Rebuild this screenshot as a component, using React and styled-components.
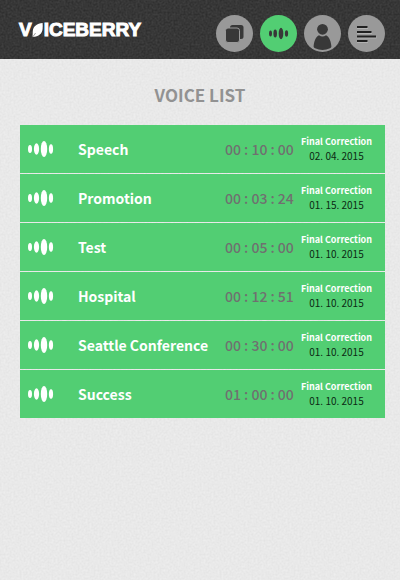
import React from "react";
import styled, { createGlobalStyle } from "styled-components";

const grain = (light, dark) =>
  `url("data:image/svg+xml,${encodeURIComponent(
    `<svg xmlns="http://www.w3.org/2000/svg" width="200" height="200"><filter id="n" x="0" y="0" width="100%" height="100%" color-interpolation-filters="sRGB"><feTurbulence type="fractalNoise" baseFrequency="0.5" numOctaves="3" seed="4" stitchTiles="stitch"/><feColorMatrix type="matrix" values="${light} 0 0 0 ${dark} ${light} 0 0 0 ${dark} ${light} 0 0 0 ${dark} 0 0 0 0 1"/></filter><rect width="200" height="200" filter="url(#n)"/></svg>`
  )}")`;

const GlobalStyle = createGlobalStyle`
  *, *::before, *::after { box-sizing: border-box; }
  body {
    margin: 0;
    min-height: 100vh;
    background: #e8e8e8 ${grain(0.06, 0.882)};
    font-family: "Noto Sans CJK SC", "Open Sans", sans-serif;
    font-variant-ligatures: none;
  }
`;

const Header = styled.header`
  display: flex;
  align-items: center;
  justify-content: space-between;
  padding: 15px 15px 7px 19px;
  background: #383838 ${grain(0.12, 0.155)};
`;

const Logo = styled.a`
  display: flex;
  align-items: center;
  margin-bottom: 8px;
  color: #fff;
  font: bold 19px/20px "Liberation Sans", Arial, sans-serif;
  -webkit-text-stroke: 1px #fff;
  stroke-linejoin: round;
  text-decoration: none;
`;

const Leaf = styled.svg`
  width: 12px;
  height: 14px;
`;

const Nav = styled.nav`
  display: flex;
  gap: 7px;
`;

const NavButton = styled.button`
  width: 37px;
  height: 37px;
  padding: 0;
  border: 0;
  border-radius: 50%;
  background: ${({ $active }) => ($active ? "#52ce73" : "#999")};
  color: #383838;
  cursor: pointer;

  svg {
    display: block;
    width: 37px;
    height: 37px;
  }
`;

const Main = styled.main`
  padding: 24px 15px 24px 20px;
`;

const Title = styled.h1`
  margin: 0 0 18px;
  padding-right: 5px;
  color: #929292;
  font-size: 17px;
  font-weight: bold;
  line-height: 24px;
  text-align: center;
`;

const List = styled.ul`
  display: flex;
  flex-direction: column;
  gap: 1px;
  margin: 0;
  padding: 0;
  list-style: none;
`;

const Row = styled.li`
  display: grid;
  grid-template-columns: 50px 1fr 68px 76px;
  align-items: center;
  min-height: 48px;
  padding: 0 16px 0 8px;
  background: #52ce73;
`;

const Wave = styled.svg`
  width: 26px;
  height: 16px;
  fill: #fff;
`;

const Name = styled.span`
  color: #fff;
  font-size: 14px;
  font-weight: bold;
  line-height: 20px;
  white-space: nowrap;
`;

const Duration = styled.time`
  color: #707070;
  font-size: 14px;
  font-weight: 500;
  line-height: 20px;
  white-space: nowrap;
`;

const Correction = styled.div`
  display: flex;
  flex-direction: column;
  align-items: center;
  padding-left: 11px;
  line-height: 14px;
  white-space: nowrap;
`;

const CorrectionLabel = styled.span`
  color: #fff;
  font-size: 9px;
  font-weight: bold;
`;

const CorrectionDate = styled.time`
  color: #0c2a14;
  font-size: 10px;
`;

const recordings = [
  { name: "Speech", duration: "00 : 10 : 00", date: "02. 04. 2015" },
  { name: "Promotion", duration: "00 : 03 : 24", date: "01. 15. 2015" },
  { name: "Test", duration: "00 : 05 : 00", date: "01. 10. 2015" },
  { name: "Hospital", duration: "00 : 12 : 51", date: "01. 10. 2015" },
  { name: "Seattle Conference", duration: "00 : 30 : 00", date: "01. 10. 2015" },
  { name: "Success", duration: "01 : 00 : 00", date: "01. 10. 2015" },
];

function WaveIcon() {
  return (
    <Wave viewBox="0 0 26 16" aria-hidden="true">
      <ellipse cx="2" cy="8" rx="2" ry="4" />
      <ellipse cx="8.5" cy="8" rx="2.6" ry="5.8" />
      <ellipse cx="16" cy="8" rx="3.2" ry="8" />
      <ellipse cx="23" cy="8" rx="2.1" ry="4.8" />
    </Wave>
  );
}

function Brand() {
  return (
    <Logo href="#" aria-label="VOICEBERRY">
      V
      <Leaf viewBox="0 0 12 14" aria-hidden="true">
        <path d="M10.6 0C5 .6 1.200 3.500 .8 7.800C.7 10 .7 12 .5 13.800C6.500 14 10.300 10.500 10.600 6C10.800 4 10.800 2 10.600 0Z" fill="#fff" />
        <path d="M.8 13.600C2 12.500 2.800 11.300 3.500 10" fill="none" stroke="#383838" strokeWidth=".5" />
      </Leaf>
      ICEBERRY
    </Logo>
  );
}

export default function App() {
  return (
    <>
      <GlobalStyle />
      <Header>
        <Brand />
        <Nav aria-label="Main">
          <NavButton aria-label="Files">
            <svg viewBox="0 0 37 37">
              <rect x="14" y="10" width="13.500" height="14" rx="2.500" fill="currentColor" />
              <rect x="9.500" y="13" width="14" height="14.500" rx="2.500" fill="currentColor" stroke="#999" />
            </svg>
          </NavButton>
          <NavButton $active aria-label="Voice list" aria-current="page">
            <svg viewBox="0 0 37 37" fill="currentColor">
              <ellipse cx="10.500" cy="18.500" rx="1.500" ry="3" />
              <ellipse cx="15.200" cy="18.500" rx="1.800" ry="4" />
              <ellipse cx="21" cy="18.500" rx="2.300" ry="5.700" />
              <ellipse cx="26.500" cy="18.500" rx="1.600" ry="3.300" />
            </svg>
          </NavButton>
          <NavButton aria-label="Profile">
            <svg viewBox="0 0 37 37" fill="currentColor">
              <circle cx="18.500" cy="14.300" r="5.400" />
              <path d="M15 20.200Q18.500 22.600 22 20.200C25.500 22 27 26.500 27.400 31.500Q27.400 32.800 26 33.300Q18.500 36.500 11 33.300Q9.600 32.800 9.600 31.500C10 26.500 11.500 22 15 20.200Z" />
            </svg>
          </NavButton>
          <NavButton aria-label="Menu">
            <svg viewBox="0 0 37 37">
              <path d="M9 13H20M9 18H24M9 22.500H28.500M9 27H20" stroke="#b2b2b2" strokeWidth="2" />
              <path d="M9 12H19.500M9 17H23.500M9 21.500H28M9 26H19.500" stroke="#202020" strokeWidth="2" />
            </svg>
          </NavButton>
        </Nav>
      </Header>
      <Main>
        <Title>VOICE LIST</Title>
        <List>
          {recordings.map((item) => (
            <Row key={item.name}>
              <WaveIcon />
              <Name>{item.name}</Name>
              <Duration>{item.duration}</Duration>
              <Correction>
                <CorrectionLabel>Final Correction</CorrectionLabel>
                <CorrectionDate>{item.date}</CorrectionDate>
              </Correction>
            </Row>
          ))}
        </List>
      </Main>
    </>
  );
}
